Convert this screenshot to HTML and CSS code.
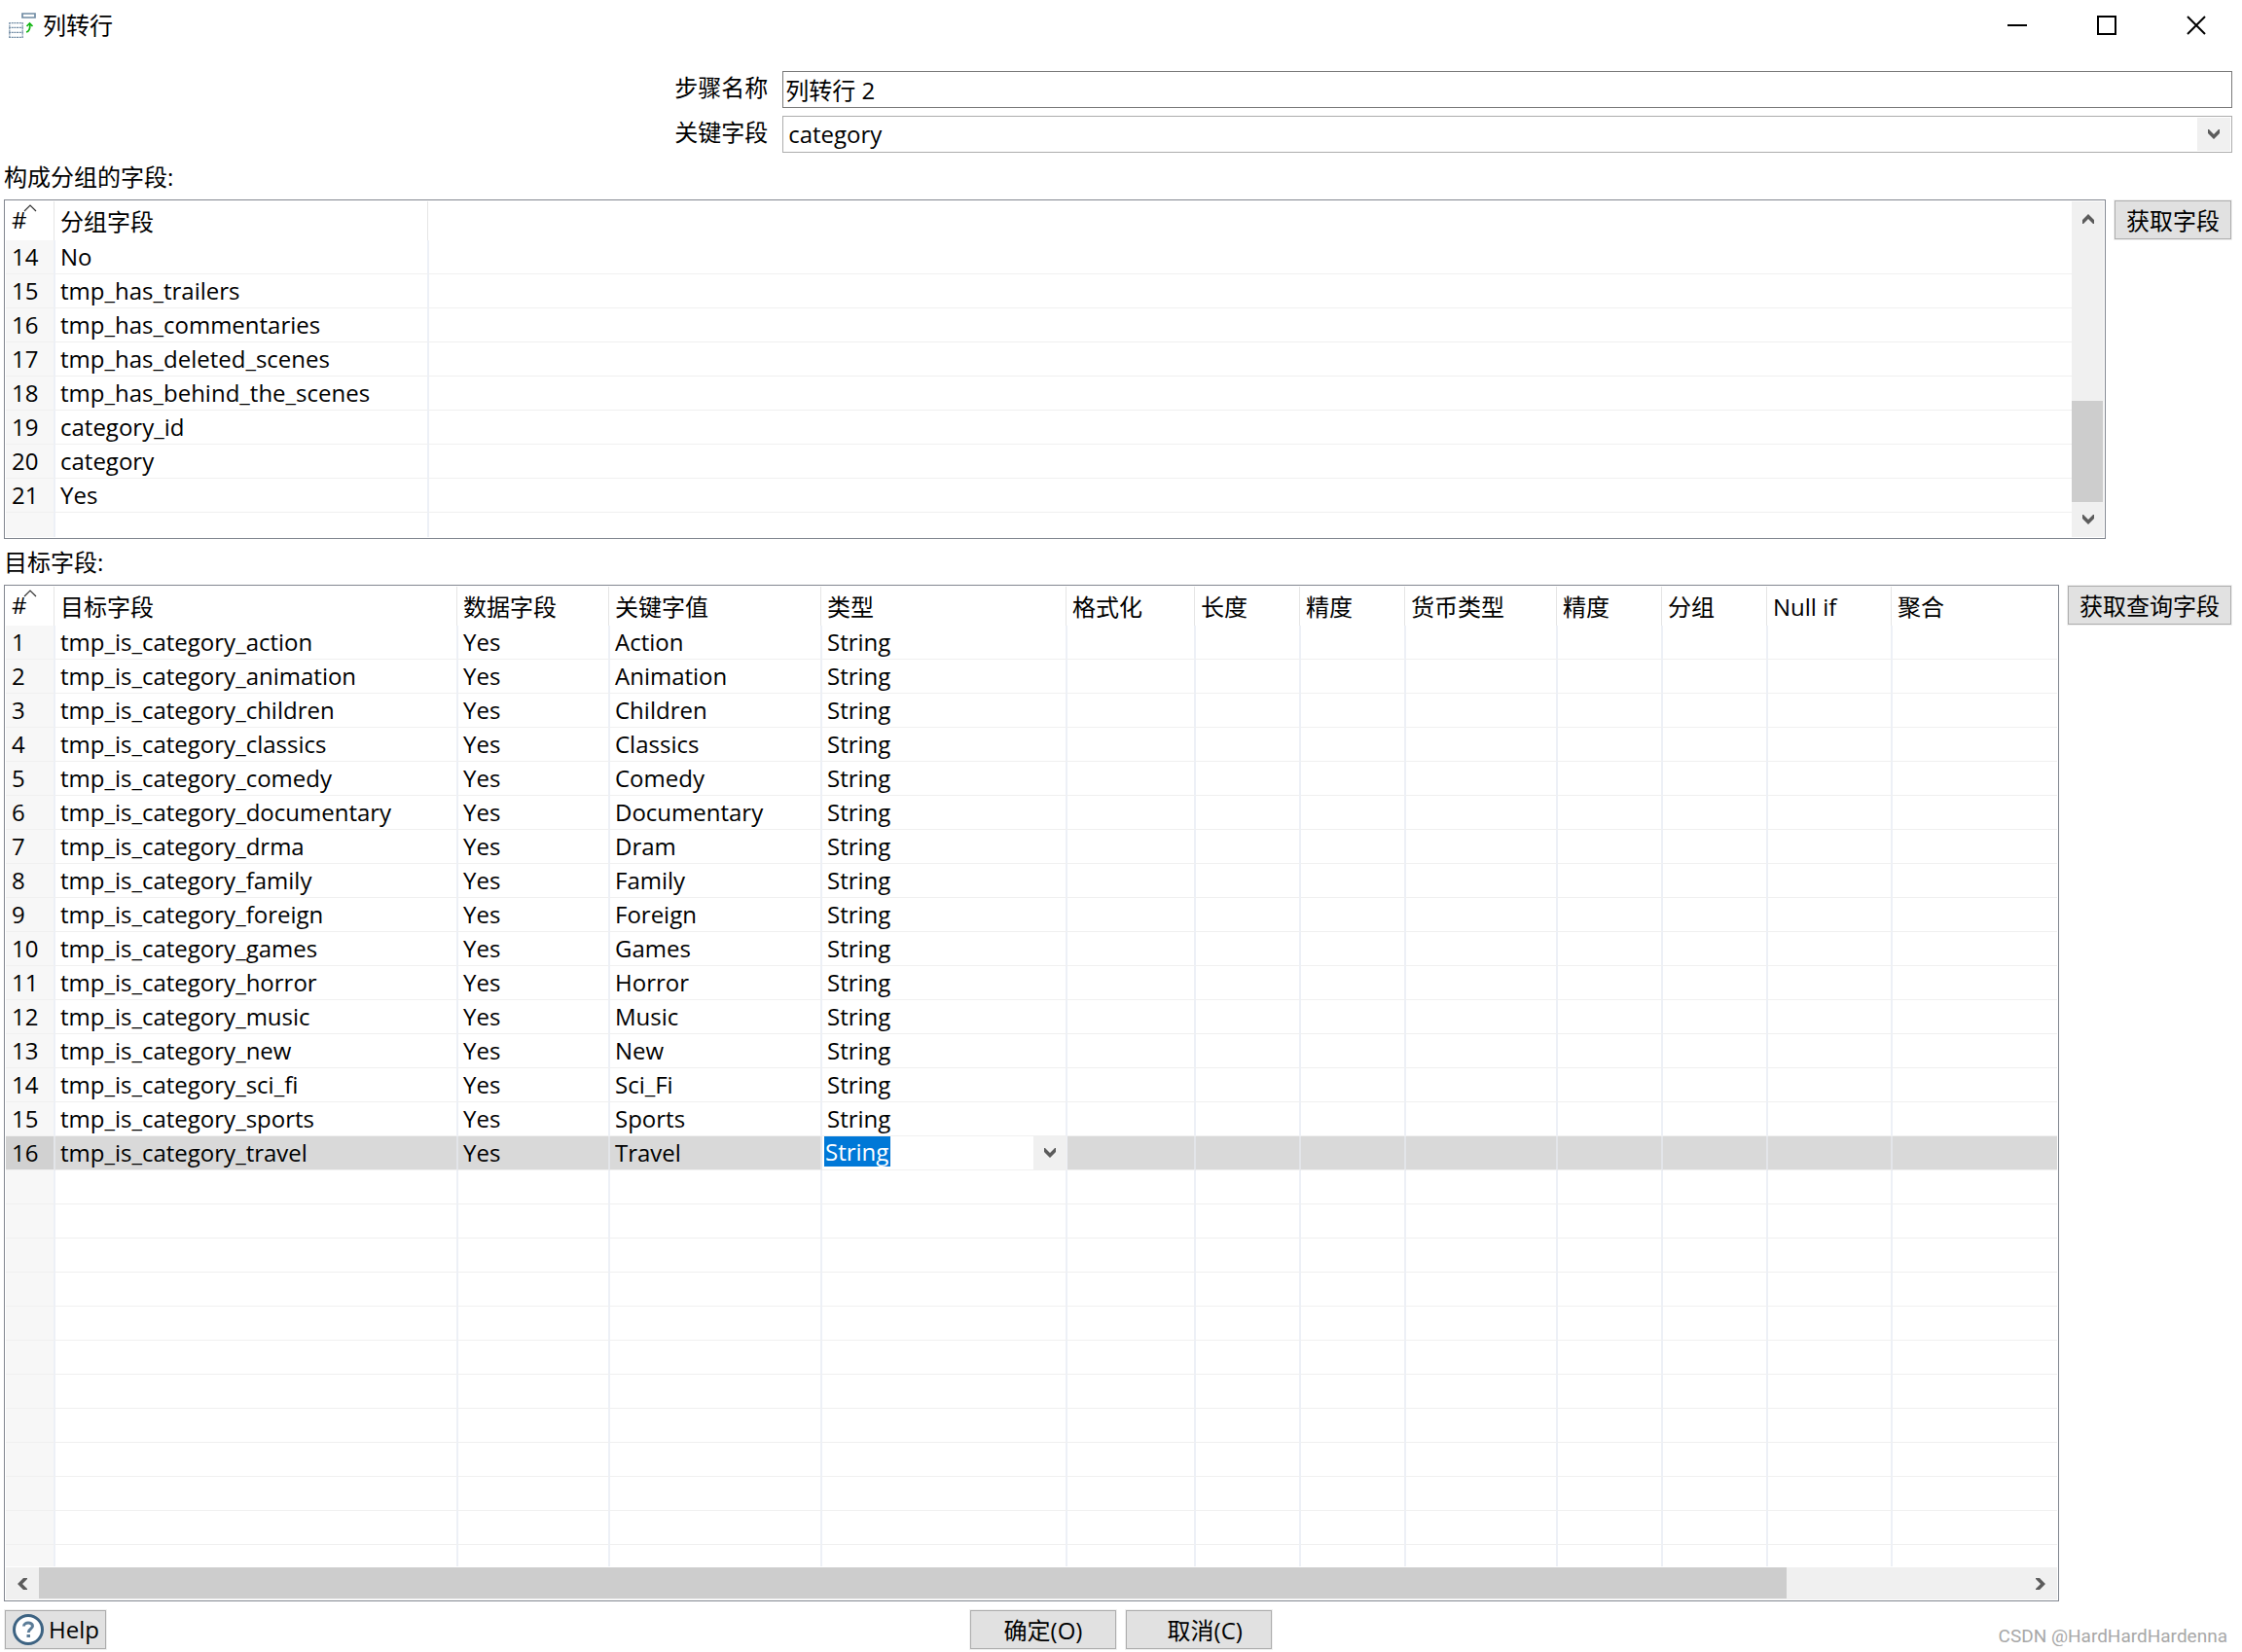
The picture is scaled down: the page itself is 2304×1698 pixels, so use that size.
FILE: index.html
```html
<!DOCTYPE html>
<html lang="zh-CN">
<head>
<meta charset="utf-8">
<title>列转行</title>
<link rel="stylesheet" href="styles.css">
</head>
<body>
<svg class="defs" aria-hidden="true">
  <symbol id="down" viewBox="0 0 12 10"><path d="M0 0H1L6 5L11 0H12V4L6 10L0 4Z" fill="#5c5c5c"/></symbol>
  <symbol id="up" viewBox="0 0 12 10"><path d="M0 10H1L6 5L11 10H12V6L6 0L0 6Z" fill="#5c5c5c"/></symbol>
  <symbol id="left" viewBox="0 0 10 12"><path d="M10 0V1L5 6L10 11V12H6L0 6L6 0Z" fill="#5c5c5c"/></symbol>
  <symbol id="right" viewBox="0 0 10 12"><path d="M0 0V1L5 6L0 11V12H4L10 6L4 0Z" fill="#5c5c5c"/></symbol>
  <symbol id="sort" viewBox="0 0 14 8"><path d="M1 7L7 1L13 7" fill="none" stroke="#333" stroke-width="1.200"/></symbol>
</svg>

<header class="titlebar">
  <svg class="app-icon" viewBox="0 0 28 26" aria-hidden="true">
    <path d="M14 1H27V5H14Z" fill="#fff" stroke="#6f8aa3" stroke-width="1.700"/>
    <path d="M0 10.700H15M0 15.300H15M0 20.300H15M0 25.300H15" stroke="#6f8aa3" stroke-width="1.300" stroke-dasharray="2 .7"/>
    <path d="M.8 10V26M14.200 10V26" stroke="#8fa4b8" stroke-width="1.400" stroke-dasharray="2 .7"/>
    <path d="M18 20C21 19.500 22 17.500 21.800 12M18.500 14L21.500 11L24.500 14" fill="none" stroke="#12b512" stroke-width="1.700"/>
  </svg>
  <h1 class="title">列转行</h1>
  <button class="win-btn" type="button" aria-label="最小化"><svg viewBox="0 0 20 20"><path d="M0 10H20" stroke="#000" stroke-width="2"/></svg></button>
  <button class="win-btn" type="button" aria-label="最大化"><svg viewBox="0 0 20 20"><path d="M1 1H19V19H1Z" fill="none" stroke="#000" stroke-width="2"/></svg></button>
  <button class="win-btn" type="button" aria-label="关闭"><svg viewBox="0 0 20 20"><path d="M1 1L19 19M19 1L1 19" stroke="#000" stroke-width="2"/></svg></button>
</header>

<main class="dialog">
  <form class="fields">
    <label for="step">步骤名称</label>
    <input id="step" class="text" type="text" value="列转行 2">
    <label for="key">关键字段</label>
    <div class="combo">
      <select id="key"><option>category</option></select>
      <span class="drop"><svg class="chev"><use href="#down"/></svg></span>
    </div>
  </form>

  <h2 class="caption">构成分组的字段:</h2>
  <section class="block">
    <div class="pane pane-v">
      <table class="grid">
        <colgroup><col class="c-num"><col class="c-group"><col></colgroup>
        <thead><tr><th class="num">#<svg class="sort"><use href="#sort"/></svg></th><th>分组字段</th><th></th></tr></thead>
        <tbody>
          <tr><td>14</td><td>No</td><td></td></tr>
          <tr><td>15</td><td>tmp_has_trailers</td><td></td></tr>
          <tr><td>16</td><td>tmp_has_commentaries</td><td></td></tr>
          <tr><td>17</td><td>tmp_has_deleted_scenes</td><td></td></tr>
          <tr><td>18</td><td>tmp_has_behind_the_scenes</td><td></td></tr>
          <tr><td>19</td><td>category_id</td><td></td></tr>
          <tr><td>20</td><td>category</td><td></td></tr>
          <tr><td>21</td><td>Yes</td><td></td></tr>
          <tr class="cut"><td></td><td></td><td></td></tr>
        </tbody>
      </table>
      <div class="vbar">
        <span class="arrow"><svg class="chev"><use href="#up"/></svg></span>
        <span class="track"></span>
        <span class="thumb"></span>
        <span class="arrow"><svg class="chev"><use href="#down"/></svg></span>
      </div>
    </div>
    <button class="btn" type="button">获取字段</button>
  </section>

  <h2 class="caption caption-second">目标字段:</h2>
  <section class="block">
    <div class="pane">
      <table class="grid">
        <colgroup><col class="c-num"><col class="c-target"><col class="c-wide"><col class="c-key"><col class="c-type"><col class="c-format"><col class="c-slim"><col class="c-slim"><col class="c-wide"><col class="c-slim"><col class="c-slim"><col class="c-null"><col></colgroup>
        <thead><tr><th class="num">#<svg class="sort"><use href="#sort"/></svg></th><th>目标字段</th><th>数据字段</th><th>关键字值</th><th>类型</th><th>格式化</th><th>长度</th><th>精度</th><th>货币类型</th><th>精度</th><th>分组</th><th>Null if</th><th>聚合</th></tr></thead>
        <tbody>
          <tr><td>1<td>tmp_is_category_action<td>Yes<td>Action<td>String<td><td><td><td><td><td><td><td></tr>
          <tr><td>2<td>tmp_is_category_animation<td>Yes<td>Animation<td>String<td><td><td><td><td><td><td><td></tr>
          <tr><td>3<td>tmp_is_category_children<td>Yes<td>Children<td>String<td><td><td><td><td><td><td><td></tr>
          <tr><td>4<td>tmp_is_category_classics<td>Yes<td>Classics<td>String<td><td><td><td><td><td><td><td></tr>
          <tr><td>5<td>tmp_is_category_comedy<td>Yes<td>Comedy<td>String<td><td><td><td><td><td><td><td></tr>
          <tr><td>6<td>tmp_is_category_documentary<td>Yes<td>Documentary<td>String<td><td><td><td><td><td><td><td></tr>
          <tr><td>7<td>tmp_is_category_drma<td>Yes<td>Dram<td>String<td><td><td><td><td><td><td><td></tr>
          <tr><td>8<td>tmp_is_category_family<td>Yes<td>Family<td>String<td><td><td><td><td><td><td><td></tr>
          <tr><td>9<td>tmp_is_category_foreign<td>Yes<td>Foreign<td>String<td><td><td><td><td><td><td><td></tr>
          <tr><td>10<td>tmp_is_category_games<td>Yes<td>Games<td>String<td><td><td><td><td><td><td><td></tr>
          <tr><td>11<td>tmp_is_category_horror<td>Yes<td>Horror<td>String<td><td><td><td><td><td><td><td></tr>
          <tr><td>12<td>tmp_is_category_music<td>Yes<td>Music<td>String<td><td><td><td><td><td><td><td></tr>
          <tr><td>13<td>tmp_is_category_new<td>Yes<td>New<td>String<td><td><td><td><td><td><td><td></tr>
          <tr><td>14<td>tmp_is_category_sci_fi<td>Yes<td>Sci_Fi<td>String<td><td><td><td><td><td><td><td></tr>
          <tr><td>15<td>tmp_is_category_sports<td>Yes<td>Sports<td>String<td><td><td><td><td><td><td><td></tr>
          <tr class="selected"><td>16<td>tmp_is_category_travel<td>Yes<td>Travel<td class="editing"><div class="cell-combo"><select aria-label="类型"><option>String</option></select><span class="drop"><svg class="chev"><use href="#down"/></svg></span></div><td><td><td><td><td><td><td><td></tr>
          <tr><td><td><td><td><td><td><td><td><td><td><td><td><td></tr>
          <tr><td><td><td><td><td><td><td><td><td><td><td><td><td></tr>
          <tr><td><td><td><td><td><td><td><td><td><td><td><td><td></tr>
          <tr><td><td><td><td><td><td><td><td><td><td><td><td><td></tr>
          <tr><td><td><td><td><td><td><td><td><td><td><td><td><td></tr>
          <tr><td><td><td><td><td><td><td><td><td><td><td><td><td></tr>
          <tr><td><td><td><td><td><td><td><td><td><td><td><td><td></tr>
          <tr><td><td><td><td><td><td><td><td><td><td><td><td><td></tr>
          <tr><td><td><td><td><td><td><td><td><td><td><td><td><td></tr>
          <tr><td><td><td><td><td><td><td><td><td><td><td><td><td></tr>
          <tr><td><td><td><td><td><td><td><td><td><td><td><td><td></tr>
          <tr class="cut"><td><td><td><td><td><td><td><td><td><td><td><td><td></tr>
        </tbody>
      </table>
      <div class="hbar">
        <span class="arrow"><svg class="chev-side"><use href="#left"/></svg></span>
        <span class="thumb"></span>
        <span class="track"></span>
        <span class="arrow"><svg class="chev-side"><use href="#right"/></svg></span>
      </div>
    </div>
    <button class="btn" type="button">获取查询字段</button>
  </section>
</main>

<footer class="actions">
  <button class="btn help" type="button"><svg class="help-icon" viewBox="0 0 32 32" aria-hidden="true"><circle cx="16" cy="16" r="14.500" fill="#fff" stroke="#3d6382" stroke-width="3"/><path d="M11.500 12.500C11.500 8 20.500 8 20.500 12.300C20.500 15.500 16.200 15 16.200 19" fill="none" stroke="#5b7c97" stroke-width="3"/><path d="M14.500 21H18V24H14.500Z" fill="#5b7c97"/></svg>Help</button>
  <div class="pair">
    <button class="btn choice" type="button">确定(O)</button>
    <button class="btn choice" type="button">&nbsp;&nbsp;取消(C)</button>
  </div>
  <span class="credit">CSDN @HardHardHardenna</span>
</footer>
</body>
</html>
```
FILE: styles.css
```css
* { box-sizing: border-box; }

body {
  margin: 0;
  min-height: 100vh;
  background: #fff;
  color: #000;
  font: 24px/32px "Open Sans", "Noto Sans CJK SC", sans-serif;
}

button, input, select { font: inherit; color: inherit; margin: 0; }
h1, h2 { margin: 0; font-size: 24px; font-weight: 400; }
svg { display: block; }
.defs { position: absolute; width: 0; height: 0; }

/* Title bar */
.titlebar { display: flex; align-items: center; height: 52px; padding: 0 1px 0 9px; }
.app-icon { width: 28px; height: 26px; }
.title { flex: 1; padding-left: 7px; }
.win-btn {
  width: 92px; height: 52px; padding: 0; border: 0; background: none;
  display: grid; place-items: center;
}
.win-btn svg { width: 20px; height: 20px; }

/* Form */
.fields {
  display: grid;
  grid-template-columns: 35fr 65fr;
  row-gap: 8px;
  padding: 21px 10px 0 2px;
}
.fields label { text-align: right; padding-right: 15px; line-height: 34px; }
.text { width: 100%; height: 38px; padding: 0 2px 2px; border: 1px solid #7a7a7a; background: #fff; }
.combo { display: flex; height: 38px; border: 1px solid #adadad; padding: 1px; }
.combo select {
  flex: 1; appearance: none; border: 0; border-radius: 0; padding: 0 4px; background: #fff;
}
.drop { width: 34px; background: #f0f0f0; display: grid; place-items: center; }
.chev { width: 12px; height: 10px; }
.chev-side { width: 10px; height: 12px; }

/* Tables */
.caption { padding: 9px 4px 0; height: 48px; }
.caption-second { height: 47px; padding-top: 8px; }
.block { display: flex; align-items: flex-start; gap: 9px; padding: 0 11px 0 4px; }
.pane { flex: 1; min-width: 0; border: 1px solid #828790; padding: 1px; }
.pane-v { display: flex; }
.pane-v .grid { flex: 1; }
.grid { width: 100%; table-layout: fixed; border-collapse: separate; border-spacing: 0; }
.c-num { width: 51px; }
.c-group { width: 384px; }
.c-target { width: 414px; }
.c-wide { width: 156px; }
.c-key { width: 218px; }
.c-type { width: 252px; }
.c-format { width: 132px; }
.c-slim { width: 108px; }
.c-null { width: 128px; }

.grid th {
  height: 40px; padding: 2px 0 0 5px; text-align: left; font-weight: 400; line-height: 32px;
  border-right: 1px solid #fff; box-shadow: inset -1px 0 #e5e5e5;
}
.grid th:last-child { box-shadow: none; }
.grid .num { position: relative; padding: 0 0 2px 6px; }
.sort { position: absolute; left: 18px; top: 3px; width: 14px; height: 8px; }
.grid td {
  height: 35px; padding: 0 0 0 5px; line-height: 34px; white-space: nowrap;
  border-right: 2px solid #edf0f6; border-bottom: 1px solid #f0f0f0;
}
.grid td:first-child { background: #f7f7f7; padding-left: 6px; }
.grid td:last-child { border-right: 0; }
.grid .cut td { height: 22px; border-bottom: 0; }
.pane-v .cut td { height: 25px; }
.grid .selected td { background: #d9d9d9; border-right: 2px solid #e3e5e9; }
.grid .selected td:first-child { background: #d1d1d1; }
.grid .selected td:last-child { border-right: 0; }
.grid .selected .editing { padding: 0 0 0 2px; background: #fff; border-right: 1px solid #edf0f6; }
.cell-combo { display: flex; justify-content: space-between; height: 34px; }
.cell-combo select {
  appearance: none; border: 0; border-radius: 0; padding: 0 1px; height: 31px; line-height: 31px;
  background: #0078d7; color: #fff;
}

/* Scroll bars */
.vbar, .hbar { display: flex; background: #f0f0f0; }
.vbar { flex-direction: column; width: 33px; }
.hbar { height: 33px; margin-top: 1px; }
.arrow { flex: none; display: grid; place-items: center; width: 34px; height: 34px; }
.vbar .arrow { width: 33px; height: 36px; }
.thumb { background: #cdcdcd; }
.vbar .track { flex: 171; }
.vbar .thumb { flex: 105; margin-right: 1px; }
.hbar .thumb { flex: 1796; margin-bottom: 1px; }
.hbar .track { flex: 244; }

/* Buttons */
.btn {
  flex: none; height: 40px; margin-top: 1px; padding: 1px 11px 0;
  border: 1px solid #adadad; border-radius: 0; background: #e1e1e1;
  box-shadow: 0 0 0 1px #f0f0f0; line-height: 36px; white-space: nowrap;
}
.actions {
  display: grid; grid-template-columns: 1fr auto 1fr; align-items: start;
  padding: 8px 5px 3px;
}
.help { display: flex; align-items: center; gap: 5px; padding: 0 6px 0 7px; justify-self: start; }
.help-icon { width: 32px; height: 32px; }
.pair { display: flex; gap: 10px; }
.choice { width: 150px; padding: 1px 0 0; }
.credit {
  justify-self: end; padding: 12px 10px 0 0;
  font: 19px/32px Roboto, Arial, sans-serif; color: #a8a8a8;
}
```
